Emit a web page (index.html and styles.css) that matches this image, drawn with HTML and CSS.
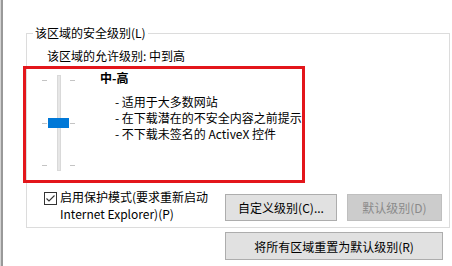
FILE: index.html
```html
<!DOCTYPE html>
<html lang="zh-CN">
<head>
<meta charset="utf-8">
<title>安全级别</title>
<link rel="stylesheet" href="styles.css">
</head>
<body>
<div class="window">
  <div class="edge"></div>
  <div class="main">
    <fieldset class="group">
      <legend class="group-title">该区域的安全级别(L)</legend>
      <div class="allowed">该区域的允许级别: 中到高</div>
      <div class="level">
        <div class="slider">
          <div class="ticks"><i></i><i></i><i></i></div>
          <div class="track"><div class="thumb"></div></div>
          <div class="ticks"><i></i><i></i><i></i></div>
        </div>
        <div class="desc">
          <div class="level-name">中-高</div>
          <ul class="bullets">
            <li>- 适用于大多数网站</li>
            <li>- 在下载潜在的不安全内容之前提示</li>
            <li>- 不下载未签名的 ActiveX 控件</li>
          </ul>
        </div>
      </div>
      <div class="bottom-row">
        <label class="check">
          <span class="box"><svg width="13" height="13" viewBox="0 0 13 13"><rect x="0.5" y="0.5" width="12" height="12" fill="#fff" stroke="#333"/><path d="M2.5 6.5 L5 9 L10.5 3.5" fill="none" stroke="#333" stroke-width="1.1"/></svg></span>
          <span class="check-text">启用保护模式(要求重新启动 Internet Explorer)(P)</span>
        </label>
        <div class="buttons">
          <button class="btn btn-custom">自定义级别(C)...</button>
          <button class="btn btn-default" disabled>默认级别(D)</button>
        </div>
      </div>
    </fieldset>
    <div class="reset-row">
      <button class="btn btn-reset">将所有区域重置为默认级别(R)</button>
    </div>
  </div>
  <div class="highlight"></div>
</div>
</body>
</html>
```
FILE: styles.css
```css
html, body {
  margin: 0;
  padding: 0;
  background: #ffffff;
}
body {
  width: 452px;
  height: 266px;
  overflow: hidden;
  font-family: "Noto Sans CJK SC", "Noto Sans", sans-serif;
  font-size: 12px;
  color: #000;
}
.window {
  position: relative;
  display: flex;
  height: 266px;
}
.edge {
  width: 1px;
  background: #d4d4d4;
  border-right: 2px solid #999;
  flex: none;
}
.main {
  flex: 1;
  display: flex;
  flex-direction: column;
}
.group {
  margin: 25px 2px 0 23px;
  border: 1px solid #dcdcdc;
  padding: 7px 7px 5px 6px;
  min-width: 0;
}
.group-title {
  padding: 0 2px;
  line-height: 16px;
}
.allowed {
  margin-left: 14px;
  line-height: 16px;
}
.level {
  display: flex;
  margin-top: 6px;
  margin-left: 9px;
}
.slider {
  display: flex;
  margin-top: 5px;
  height: 96px;
}
.ticks {
  width: 5px;
  display: flex;
  flex-direction: column;
  justify-content: space-between;
  padding: 5px 0 5px;
  box-sizing: border-box;
}
.ticks i {
  display: block;
  height: 1px;
  background: #c4c4c4;
}
.track {
  position: relative;
  width: 4px;
  margin: 0 9px 0 10px;
  background: #e6e6e6;
  box-sizing: border-box;
  border: 1px solid #d9d9d9;
}
.thumb {
  position: absolute;
  left: -10px;
  top: 42px;
  width: 21px;
  height: 10px;
  background: #0078d7;
}
.desc {
  margin-left: 25px;
}
.level-name {
  font-weight: bold;
  line-height: 16px;
}
.bullets {
  list-style: none;
  margin: 8px 0 0 15px;
  padding: 0;
  line-height: 16px;
  white-space: nowrap;
}
.bottom-row {
  display: flex;
  align-items: flex-start;
  margin-top: 17px;
}
.check {
  display: flex;
  align-items: flex-start;
  margin-left: 11px;
}
.box {
  display: block;
  width: 13px;
  height: 13px;
  margin-top: 4px;
}
.box svg {
  display: block;
}
.check-text {
  width: 160px;
  margin-left: 3px;
  line-height: 17px;
}
.buttons {
  display: flex;
  gap: 10px;
  margin-left: auto;
  margin-top: 6px;
}
.btn {
  font-family: inherit;
  font-size: 12px;
  height: 27px;
  padding: 0;
  margin: 0;
  background: #e1e1e1;
  border: 1px solid #adadad;
  color: #000;
  box-sizing: border-box;
}
.btn-custom {
  width: 112px;
}
.btn-default {
  width: 95px;
  background: #cccccc;
  border-color: #bfbfbf;
  color: #8a8a8a;
}
.reset-row {
  display: flex;
  justify-content: flex-end;
  padding-right: 9px;
  margin-top: 4px;
}
.btn-reset {
  width: 218px;
  height: 28px;
}
.highlight {
  position: absolute;
  left: 23px;
  top: 66px;
  width: 282px;
  height: 117px;
  box-sizing: border-box;
  border: 3px solid #e3161b;
}
```
